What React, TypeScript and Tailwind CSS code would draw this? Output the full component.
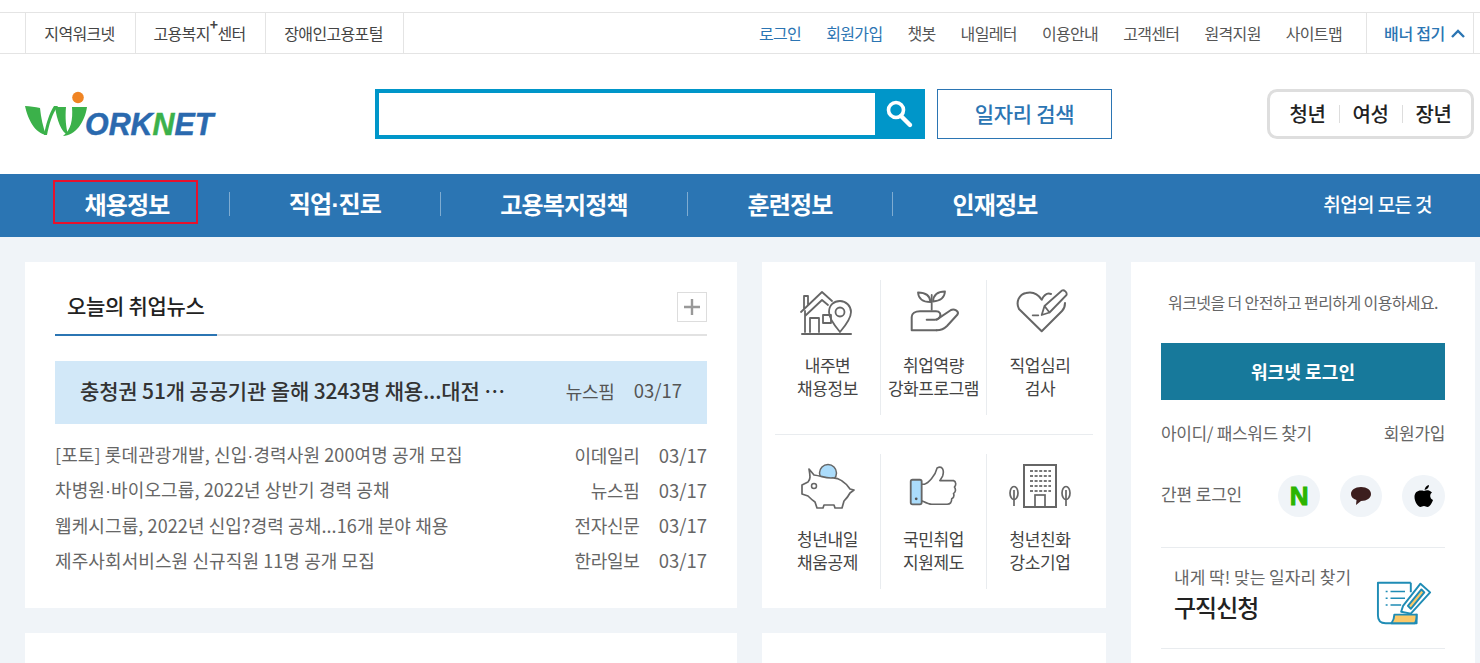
import React from 'react';

const FONT = "font-['Noto_Sans_CJK_KR','Noto_Sans',sans-serif]";

const topLeft = ['지역워크넷', '고용복지센터', '장애인고용포털'];
const topRight = [
  { label: '로그인', blue: true },
  { label: '회원가입', blue: true },
  { label: '챗봇' },
  { label: '내일레터' },
  { label: '이용안내' },
  { label: '고객센터' },
  { label: '원격지원' },
  { label: '사이트맵' },
];

const news = [
  { title: '[포토] 롯데관광개발, 신입·경력사원 200여명 공개 모집', source: '이데일리', date: '03/17' },
  { title: '차병원·바이오그룹, 2022년 상반기 경력 공채', source: '뉴스핌', date: '03/17' },
  { title: '웹케시그룹, 2022년 신입?경력 공채...16개 분야 채용', source: '전자신문', date: '03/17' },
  { title: '제주사회서비스원 신규직원 11명 공개 모집', source: '한라일보', date: '03/17' },
];

// the CJK middle dot is much wider than in the reference
const withDot = (text: string) => {
  const parts = text.split('·');
  if (parts.length === 1) return text;
  return (
    <>
      {parts[0]}
      <span className="font-['Liberation_Sans',sans-serif]">·</span>
      {parts[1]}
    </>
  );
};

const Logo = () => (
  <svg width="200" height="54" viewBox="0 -3 200 54" className="mt-[4px] shrink-0">
    <circle cx="53" cy="5.5" r="5.8" fill="#f08423" />
    <path d="M0 14 C5 14.5 10 14.5 15 16 C16 26 18 35 21 43 C10 41 3 28 0 14Z" fill="#3bb14a" />
    <path d="M19 43 C21 32 24 22 29 14 L33 14 C27 22 24 33 22 43Z" fill="#3bb14a" />
    <path d="M30 15 L41 15 C40 26 41 35 43 43 C36 40 32 28 30 15Z" fill="#3bb14a" />
    <path d="M38 44 C50 44 60 30 62 15 L47 15 C48 28 46 38 38 44Z" fill="#3bb14a" />
    <text transform="translate(60 43) scale(0.95 1)" fontFamily="'Liberation Sans',sans-serif" fontSize="32" fontWeight="700" fontStyle="italic" strokeWidth="0.5">
      <tspan fill="#2a69ae" stroke="#2a69ae">ORK</tspan>
      <tspan fill="#3bb14a" stroke="#3bb14a">N</tspan>
      <tspan fill="#2a69ae" stroke="#2a69ae">ET</tspan>
    </text>
  </svg>
);

const iconProps = { width: 56, height: 48, viewBox: '0 0 56 48', fill: 'none', stroke: '#666', strokeWidth: 1.8, strokeLinejoin: 'round' as const, strokeLinecap: 'round' as const };

const HouseIcon = () => (
  <svg {...iconProps}>
    <path d="M1 23 L22 3 L32 12 M4 20 V7 H8 V16" />
    <path d="M5 22 V43 M5 27 L22 11 L28 16" />
    <path d="M10 43 V29 H19 V43 M23 26 H31 V34 H23 Z" />
    <path d="M40 43 C34 36 29 29 29 23 C29 16 34 12 40 12 C46 12 51 17 51 23 C51 29 46 36 40 43Z" />
    <circle cx="40" cy="23" r="4.5" />
    <path d="M2 45 H51" strokeWidth="2" />
  </svg>
);
const PlantIcon = () => (
  <svg {...iconProps}>
    <path d="M25.7 20.7 V6" />
    <path d="M24.5 13 C17 13 12.5 10 12 3.5 C19 3.5 24 6 24.5 13Z" />
    <path d="M27 12.5 C34 12 38.5 9 39 2.5 C32 2.5 27.5 5.5 27 12.5Z" />
    <path d="M30.7 41.3 H5.7 V28 C5.7 24.5 9 22.3 14 22.3 H30 C34 22.3 35 25 34 27.5 C33 30 31.5 30.7 29 30.7 H20.7" strokeWidth="2" />
    <path d="M30.7 30.7 L45 21 C48 19.5 53.5 22 51.5 25.5 L41 37 C38 40 35 41.3 30.7 41.3" strokeWidth="2" />
  </svg>
);
const HeartIcon = () => (
  <svg {...iconProps}>
    <path d="M39 5 C35 3.5 32 6 29.7 10.7 C26 5 20 2.5 14 4 C7 5.5 3.5 13 7 20 L29.7 42.3 L50 22 C52 20 53 17 53 14" strokeWidth="2" />
    <path d="M29.7 26 L32.5 17 L50 1.5 C52 0.5 55.5 3.5 54.5 6 L37.5 23.5 Z M32.5 17 L37.5 23.5" />
    <path d="M20.7 26.3 H26.3" />
  </svg>
);
const PigIcon = () => (
  <svg width="56" height="48" viewBox="0 0 56 48" fill="none">
    <circle cx="28" cy="10" r="8.5" fill="#abdcfb" stroke="#666" strokeWidth="1.5" />
    <path d="M9 6 L14 12 C22 13 24 15 31 15 C39 14 46 20 50 26 L54 27 L50 30 C48 34 46 36 44 38 L42 45 H35 L34 42 H24 L23 45 H17 L15 39 C12 37 10 35 8 33 L2 31 V22 L8 19 C11 16 10 12 9 6Z" fill="#fff" stroke="#666" strokeWidth="1.7" strokeLinejoin="round" />
    <circle cx="14" cy="23" r="2.5" stroke="#666" strokeWidth="1.5" />
  </svg>
);
const ThumbIcon = () => (
  <svg width="51" height="44" viewBox="0 0 56 48" fill="none" stroke="#666" strokeWidth="1.8" strokeLinejoin="round">
    <rect x="3" y="16" width="12" height="27" rx="2" fill="#abdcfb" strokeWidth="2" />
    <circle cx="9" cy="37" r="1.5" fill="#555" stroke="none" />
    <path d="M15 21 H18 C22 20 30 12 32 3 C38 0 40 6 38 12 L35 17 H50 C53 18 53 22 51 24 C53 27 52 30 50 31 C51 34 50 36 48 37 C48 41 46 43 43 43 H26 C22 43 19 41 15 39" />
  </svg>
);
const BuildingIcon = () => (
  <svg width="64" height="48" viewBox="0 0 64 48" fill="none" stroke="#666" strokeWidth="1.7">
    <rect x="16" y="2" width="32" height="42" strokeWidth="2" />
    <path d="M22 8 H43 M22 13 H43 M22 18 H43 M22 23 H43 M22 28 H43" strokeDasharray="3 1.6" strokeWidth="2" stroke="#777" />
    <rect x="27" y="32" width="10" height="12" />
    <ellipse cx="6" cy="30" rx="4" ry="6.5" />
    <path d="M6 27 V43" />
    <ellipse cx="58" cy="30" rx="4" ry="6.5" />
    <path d="M58 27 V43" />
  </svg>
);

const PaperIcon = () => (
  <svg width="58" height="46" viewBox="0 0 60 46" fill="none" stroke="#1f8cb5" strokeWidth="2" strokeLinejoin="round">
    <path d="M36 2 H2 V36 C2 41 5 44 10 44 H42 L42 34 M36 2 V12" />
    <path d="M16 44 C18 41 19 38 19 35 H42 C42 39 42 42 40 44Z" fill="#fbc868" />
    <path d="M10 11 H12 M15 11 H30 M10 18 H12 M15 18 H30 M10 25 H12 M15 25 H26" strokeWidth="1.6" />
    <path d="M28 26 L46 3 L56 12 L36 34 L26 32Z" fill="#fff" />
    <path d="M33 26 L47 9 L50 12 L36 29Z" fill="#fbc868" />
  </svg>
);

const services = [
  [
    { Icon: HouseIcon, lines: ['내주변', '채용정보'] },
    { Icon: PlantIcon, lines: ['취업역량', '강화프로그램'] },
    { Icon: HeartIcon, lines: ['직업심리', '검사'] },
  ],
  [
    { Icon: PigIcon, lines: ['청년내일', '채움공제'] },
    { Icon: ThumbIcon, lines: ['국민취업', '지원제도'] },
    { Icon: BuildingIcon, lines: ['청년친화', '강소기업'] },
  ],
];

export default function App() {
  return (
    <div className={`h-[663px] w-[1480px] overflow-hidden bg-[#f0f4f8] ${FONT}`}>
      {/* Top utility bar */}
      <div className="bg-white pt-3">
        <div className="flex h-[42px] items-center justify-between border-y border-[#e4e4e4] pl-[25px] pr-[6px] text-[16px] tracking-[-0.65px] text-[#444]">
          <div className="flex h-full border-l border-[#e4e4e4]">
            {topLeft.map((label, i) => (
              <a key={label} className={`flex h-full items-center justify-center border-r border-[#e4e4e4] pr-[2px] ${i === 0 ? 'w-[110px]' : i === 1 ? 'w-[130px]' : 'w-[138px]'}`}>
                {i === 1 ? (
                  <>고용복지<sup className="-mt-1 text-[14px] font-bold leading-none">+</sup>센터</>
                ) : label}
              </a>
            ))}
          </div>
          <div className="flex h-full items-center">
            <div className="flex gap-[25px] pr-[24px]">
              {topRight.map(item => (
                <a key={item.label} className={item.blue ? 'text-[#2b75b3]' : 'text-[#555]'}>{item.label}</a>
              ))}
            </div>
            <button className="flex h-full w-[108px] items-center gap-[6px] border-x border-[#e4e4e4] pl-[17px] font-medium tracking-[-0.3px] text-[#2b75b3]">
              배너 접기
              <svg width="14" height="9" viewBox="0 0 14 9" fill="none" stroke="#2b75b3" strokeWidth="2.4"><path d="M1 8 L7 2 L13 8" /></svg>
            </button>
          </div>
        </div>

        {/* Logo and search */}
        <div className="flex h-[120px] items-center pl-[25px] pr-[5px]">
          <Logo />
          <div className="ml-[150px] flex h-[50px] w-[550px] border-4 border-[#0096c9]">
            <input className="min-w-0 flex-1 bg-white outline-none" />
            <button className="flex w-[46px] items-center justify-center bg-[#0096c9] pl-[2px]">
              <svg width="30" height="30" viewBox="0 0 30 30" fill="none" stroke="#fff"><circle cx="12" cy="11" r="7.5" strokeWidth="3.6" /><path d="M17 17 L26 26" strokeWidth="4.4" strokeLinecap="round" /></svg>
            </button>
          </div>
          <button className="ml-3 h-[50px] w-[175px] border border-[#2b75b3] text-[21px] font-medium tracking-[-0.3px] text-[#2b75b3]">일자리 검색</button>
          <div className="ml-auto mr-[1px] flex h-[50px] w-[207px] items-center justify-center rounded-[10px] border-[3px] border-[#dedede] text-[20px] font-medium tracking-[-0.4px] text-[#222]">
            <span>청년</span>
            <i className="mx-[13px] h-[18px] w-px bg-[#ddd]" />
            <span>여성</span>
            <i className="mx-[13px] h-[18px] w-px bg-[#ddd]" />
            <span>장년</span>
          </div>
        </div>
      </div>

      {/* Main navigation */}
      <nav className="flex h-[63px] items-center bg-[#2b75b3] pb-[3px] pl-[53px] pr-[48px] text-[24px] font-bold tracking-[-0.8px] text-white">
        <a className="mb-[5px] flex h-[44px] w-[145px] items-center justify-center border-2 border-[#e8112d] pl-[3px] pt-[5px]">채용정보</a>
        <i className="ml-[31px] h-6 w-px bg-white/40" />
        <a className="w-[210px] text-center">{withDot('직업·진로')}</a>
        <i className="h-6 w-px bg-white/40" />
        <a className="w-[246px] text-center">고용복지정책</a>
        <i className="h-6 w-px bg-white/40" />
        <a className="w-[204px] text-center">훈련정보</a>
        <i className="h-6 w-px bg-white/40" />
        <a className="w-[204px] text-center">인재정보</a>
        <span className="ml-auto text-[19px] font-medium tracking-[-0.6px]">취업의 모든 것</span>
      </nav>

      {/* Content */}
      <div className="flex items-start gap-[25px] pl-[25px] pt-[25px]">
        <div className="flex w-[712px] flex-col gap-[25px]">
          <section className="h-[346px] bg-white px-[30px] pt-[20px]">
            <div className="relative flex h-[54px] items-center justify-between border-b-2 border-[#e2e2e2]">
              <h2 className="ml-3 mt-[-4px] text-[21px] font-medium tracking-[-0.3px] text-[#222]">오늘의 취업뉴스</h2>
              <div className="absolute bottom-[-2px] left-0 h-[2px] w-[162px] bg-[#2b75b3]" />
              <button className="mb-[2px] flex h-[30px] w-[30px] items-center justify-center border border-[#ddd] text-[#999]">
                <svg width="16" height="16" viewBox="0 0 16 16" stroke="#999" strokeWidth="2.4"><path d="M8 0 V16 M0 8 H16" /></svg>
              </button>
            </div>
            <div className="mt-[25px] flex h-[63px] items-center bg-[#d2e8f8] pb-[3px] pl-[25px] pr-[25px] text-[#333]">
              <span className="w-[440px] truncate text-[21px] font-medium tracking-[-0.15px]">충청권 51개 공공기관 올해 3243명 채용...대전 ⋯</span>
              <span className="ml-auto text-[18px] tracking-[-0.25px] text-[#555]">뉴스핌</span>
              <span className="ml-[19px] text-[18.5px] text-[#555]">03/17</span>
            </div>
            <ul className="mt-[14px] flex flex-col text-[18px] tracking-[0.1px] text-[#666]">
              {news.map(row => (
                <li key={row.title} className="flex h-[35px] items-center">
                  <span>{withDot(row.title)}</span>
                  <span className="ml-auto tracking-[-0.25px]">{row.source}</span>
                  <span className="ml-[19px] text-[18.5px] tracking-normal">{row.date}</span>
                </li>
              ))}
            </ul>
          </section>
          <section className="h-[200px] bg-white" />
        </div>

        <div className="flex w-[344px] flex-col gap-[25px]">
          <section className="h-[346px] bg-white px-[13px] py-[18px]">
            {services.map((row, r) => (
              <div key={r} className={`flex ${r === 1 ? 'mt-[19px] border-t border-[#e9ecef] pt-[19px]' : ''}`}>
                {row.map(({ Icon, lines }, i) => (
                  <div key={lines[0]} className={`flex h-[135px] flex-col items-center ${i === 0 ? 'w-[105px]' : i === 1 ? 'w-[106px] border-l border-[#e9ecef]' : 'flex-1 border-l border-[#e9ecef]'}`}>
                    <div className="mt-[9px] flex h-[48px] items-center justify-center"><Icon /></div>
                    <p className="mt-[16px] text-center text-[17px] leading-[23px] tracking-[-0.45px] text-[#444]">
                      {lines[0]}<br />{lines[1]}
                    </p>
                  </div>
                ))}
              </div>
            ))}
          </section>
          <section className="h-[200px] bg-white" />
        </div>

        <aside className="h-[420px] w-[344px] bg-white px-[30px]">
          <p className="pt-[28px] text-center text-[16px] tracking-[-0.6px] text-[#666]">워크넷을 더 안전하고 편리하게 이용하세요.</p>
          <button className="mt-[29px] h-[57px] w-full bg-[#17799b] pb-[1px] text-[18px] font-bold tracking-[0.1px] text-white">워크넷 로그인</button>
          <div className="mt-[20px] flex justify-between text-[17px] tracking-[-0.35px] text-[#666]">
            <span>아이디/ 패스워드 찾기</span>
            <span>회원가입</span>
          </div>
          <div className="mt-[29px] flex h-[42px] items-center text-[17px] tracking-[-0.15px] text-[#666]">
            <span className="pb-[3px]">간편 로그인</span>
            <div className="ml-auto flex gap-[20px]">
              <span className="flex h-[42px] w-[42px] items-center justify-center rounded-full bg-[#f0f4f8] font-['Liberation_Sans',sans-serif] text-[26px] font-bold leading-none text-[#2db400] [-webkit-text-stroke:1px_#2db400]">N</span>
              <span className="flex h-[42px] w-[42px] items-center justify-center rounded-full bg-[#f0f4f8]">
                <svg width="22" height="20" viewBox="0 0 22 20" fill="#3c1e1e"><path d="M11 1 C17 1 21 4 21 8 C21 12 17 15 11 15 L6 19 L6.5 14 C3 13 1 11 1 8 C1 4 5 1 11 1Z" /></svg>
              </span>
              <span className="flex h-[42px] w-[43px] items-center justify-center rounded-full bg-[#f0f4f8]">
                <svg width="20" height="24" viewBox="0 0 20 24" fill="#000"><path d="M10.5 6 C11 3 13 1.5 15 1 C15 3.5 13.5 5.5 10.5 6Z" /><path d="M10 7 C12 6 15 5.5 18 8.5 C15.5 10 15.5 14.5 19 16 C17.5 20 15.5 23 13.5 23 C12 23 11.5 22 10 22 C8.5 22 7.5 23 6.5 23 C4 23 0.5 17.5 0.5 13 C0.5 7.5 5 5.5 10 7Z" /></svg>
              </span>
            </div>
          </div>
          <div className="mt-[30px] flex h-[102px] items-center border-y border-[#e9ecef] pl-[13px] pr-[11px]">
            <div className="flex-1 pb-[8px]">
              <p className="text-[17px] leading-[20px] text-[#666]">내게 딱! 맞는 일자리 찾기</p>
              <p className="mt-[6px] text-[24px] font-medium leading-[28px] tracking-[-1px] text-[#222]">구직신청</p>
            </div>
            <div className="mt-[10px]"><PaperIcon /></div>
          </div>
        </aside>
      </div>
    </div>
  );
}
